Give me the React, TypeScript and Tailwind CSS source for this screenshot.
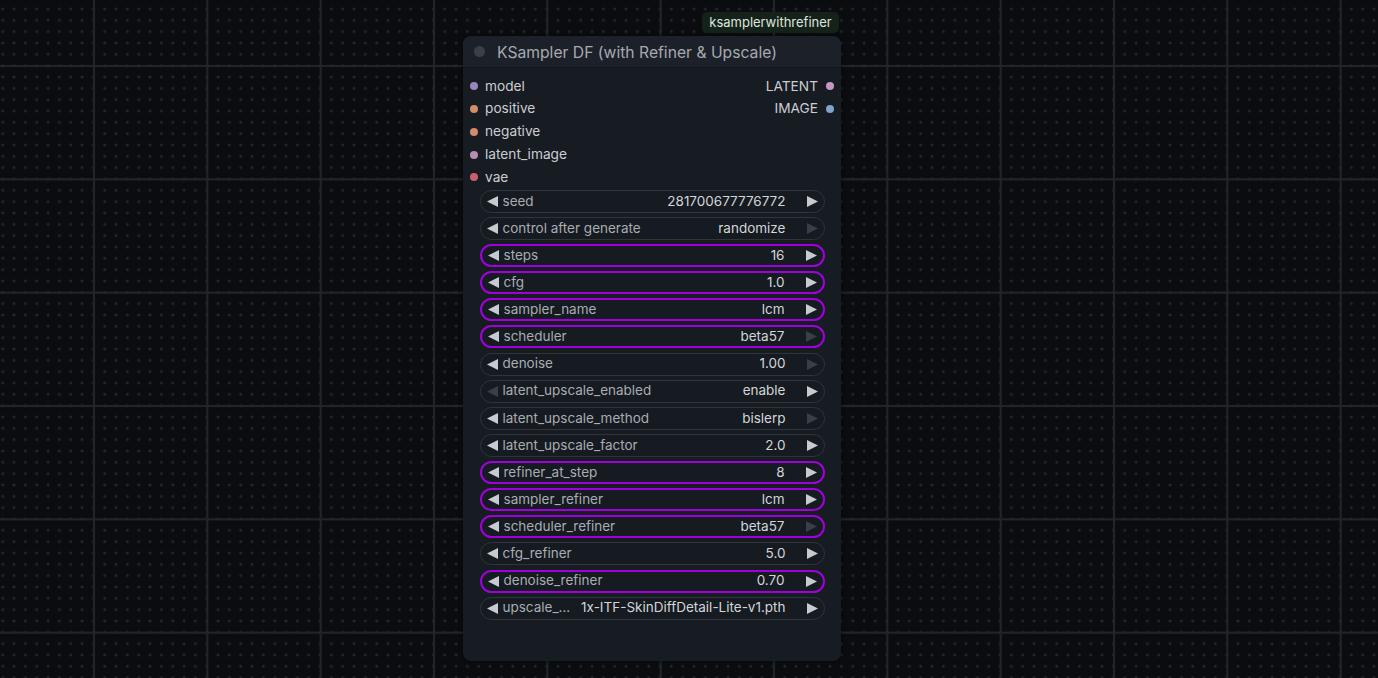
import React from "react";

type Widget = {
  label: string;
  value: string;
  active?: boolean;
  leftDim?: boolean;
  rightDim?: boolean;
};

const widgets: Widget[] = [
  { label: "seed", value: "281700677776772" },
  { label: "control after generate", value: "randomize", rightDim: true },
  { label: "steps", value: "16", active: true },
  { label: "cfg", value: "1.0", active: true },
  { label: "sampler_name", value: "lcm", active: true },
  { label: "scheduler", value: "beta57", active: true, rightDim: true },
  { label: "denoise", value: "1.00", rightDim: true },
  { label: "latent_upscale_enabled", value: "enable", leftDim: true },
  { label: "latent_upscale_method", value: "bislerp", rightDim: true },
  { label: "latent_upscale_factor", value: "2.0" },
  { label: "refiner_at_step", value: "8", active: true },
  { label: "sampler_refiner", value: "lcm", active: true },
  { label: "scheduler_refiner", value: "beta57", active: true, rightDim: true },
  { label: "cfg_refiner", value: "5.0" },
  { label: "denoise_refiner", value: "0.70", active: true },
  { label: "upscale_...", value: "1x-ITF-SkinDiffDetail-Lite-v1.pth" },
];

const inputs = [
  { name: "model", color: "#9a86bd" },
  { name: "positive", color: "#d38b6c" },
  { name: "negative", color: "#d38b6c" },
  { name: "latent_image", color: "#b98bb7" },
  { name: "vae", color: "#c9606b" },
];

const outputs = [
  { name: "LATENT", color: "#c597c4" },
  { name: "IMAGE", color: "#80a3c9" },
];

function Arrow({ dir, dim }: { dir: "l" | "r"; dim?: boolean }) {
  return (
    <svg width="11" height="11" viewBox="0 0 11 11" className="shrink-0">
      {dir === "l" ? (
        <polygon points="11,0 11,11 0,5.5" fill={dim ? "#3a3f47" : "#c7cbcf"} />
      ) : (
        <polygon points="0,0 0,11 11,5.5" fill={dim ? "#3a3f47" : "#c7cbcf"} />
      )}
    </svg>
  );
}

function Background() {
  return (
    <svg className="absolute inset-0 w-full h-full" xmlns="http://www.w3.org/2000/svg">
      <defs>
        <pattern id="dots" x="-2.97" y="3.33" width="11.3333" height="11.3333" patternUnits="userSpaceOnUse">
          <rect x="4.2" y="5.17" width="3" height="1" fill="#2a2d34" />
          <rect x="5.2" y="4.17" width="1" height="3" fill="#2a2d34" />
        </pattern>
        <pattern id="lines" x="-19.33" y="-47.33" width="113.3333" height="113.3333" patternUnits="userSpaceOnUse">
          <rect x="112.33" y="0" width="2" height="113.3333" fill="#21252b" />
          <rect x="0" y="112.33" width="113.3333" height="2" fill="#21252b" />
          <rect x="0" y="0" width="1" height="113.3333" fill="#21252b" />
          <rect x="0" y="0" width="113.3333" height="1" fill="#21252b" />
        </pattern>
      </defs>
      <rect width="100%" height="100%" fill="url(#dots)" />
      <rect width="100%" height="100%" fill="url(#lines)" />
    </svg>
  );
}

export default function App() {
  return (
    <div
      className="relative w-[1378px] h-[678px] overflow-hidden bg-[#0b0c0f]"
      style={{ fontFamily: "Inter, 'Liberation Sans', Arial, sans-serif" }}
    >
      <Background />

      {/* badge */}
      <div className="absolute left-[702px] top-[12px] h-[21px] w-[137px] rounded-[5px] bg-[#14221a] flex items-center justify-center pt-[1px] text-[13px] text-[#dfe5df]">
        ksamplerwithrefiner
      </div>

      {/* node */}
      <div className="absolute left-[463px] top-[36px] w-[378px] h-[625px] rounded-[8px] bg-[#171b22] shadow-[0_0_4px_rgba(0,0,0,0.6)] flex flex-col overflow-hidden">
        <div className="h-[32px] bg-[#1c2029] border-b border-[#14171d] flex items-center shrink-0">
          <div className="ml-[11px] w-[11px] h-[11px] rounded-full bg-[#3a3f48]" />
          <div className="ml-[12px] pt-[2px] text-[15.7px] text-[#a7aaaf] leading-none">
            KSampler DF (with Refiner &amp; Upscale)
          </div>
        </div>

        <div className="flex pt-[7px]">
          <div className="flex flex-col flex-1">
            {inputs.map((s) => (
              <div key={s.name} className="h-[22.75px] flex items-center">
                <div className="ml-[7px] w-[8px] h-[8px] rounded-full" style={{ background: s.color }} />
                <div className="ml-[7px] text-[13.7px] text-[#cbced2] leading-none">{s.name}</div>
              </div>
            ))}
          </div>
          <div className="flex flex-col">
            {outputs.map((s) => (
              <div key={s.name} className="h-[22.75px] flex items-center justify-end">
                <div className="text-[13.7px] text-[#cbced2] leading-none">{s.name}</div>
                <div className="ml-[8px] mr-[7px] w-[8px] h-[8px] rounded-full" style={{ background: s.color }} />
              </div>
            ))}
          </div>
        </div>

        <div className="flex flex-col gap-[4.13px] px-[16.5px] mt-[1px]">
          {widgets.map((w) => (
            <div
              key={w.label}
              className={
                "h-[23px] rounded-full bg-[#161a21] flex items-center px-[6px] " +
                (w.active ? "border-2 border-[#a000dc]" : "border border-[#30353d]")
              }
            >
              <Arrow dir="l" dim={w.leftDim} />
              <div className="ml-[5px] text-[13.5px] text-[#a9adb2] leading-none whitespace-nowrap">{w.label}</div>
              <div className="flex-1 min-w-[6px]" />
              <div className="text-[13.5px] text-[#d3d6d9] leading-none whitespace-nowrap">{w.value}</div>
              <div className="w-[21px]" />
              <Arrow dir="r" dim={w.rightDim} />
            </div>
          ))}
        </div>
      </div>
    </div>
  );
}
